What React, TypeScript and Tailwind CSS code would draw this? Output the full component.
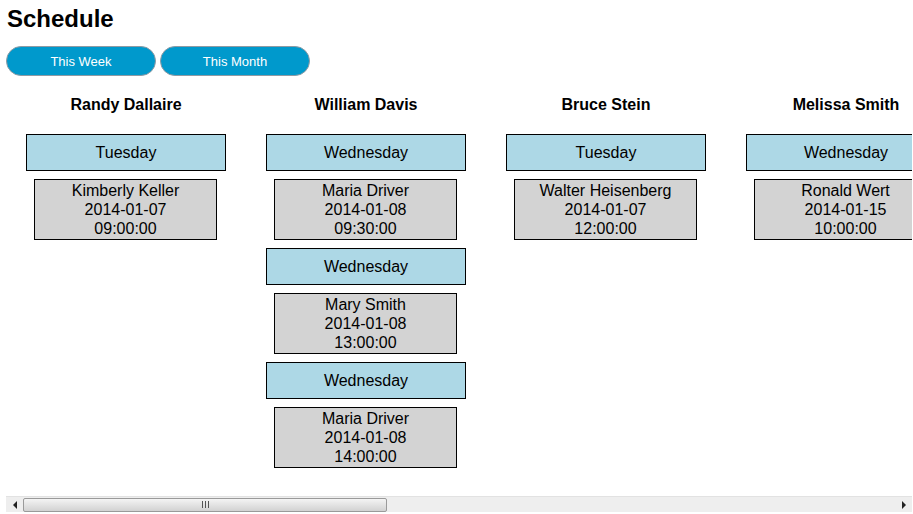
type Appointment = { day: string; client: string; date: string; time: string }

type Stylist = { name: string; appointments: Appointment[] }

const schedule: Stylist[] = [
  {
    name: 'Randy Dallaire',
    appointments: [{ day: 'Tuesday', client: 'Kimberly Keller', date: '2014-01-07', time: '09:00:00' }],
  },
  {
    name: 'William Davis',
    appointments: [
      { day: 'Wednesday', client: 'Maria Driver', date: '2014-01-08', time: '09:30:00' },
      { day: 'Wednesday', client: 'Mary Smith', date: '2014-01-08', time: '13:00:00' },
      { day: 'Wednesday', client: 'Maria Driver', date: '2014-01-08', time: '14:00:00' },
    ],
  },
  {
    name: 'Bruce Stein',
    appointments: [{ day: 'Tuesday', client: 'Walter Heisenberg', date: '2014-01-07', time: '12:00:00' }],
  },
  {
    name: 'Melissa Smith',
    appointments: [{ day: 'Wednesday', client: 'Ronald Wert', date: '2014-01-15', time: '10:00:00' }],
  },
]

function StylistColumn({ stylist }: { stylist: Stylist }) {
  return (
    <div className="flex w-[240px] shrink-0 flex-col items-center">
      <h3 className="mt-[1px] text-[16px] font-bold leading-[20px]">{stylist.name}</h3>
      <div className="mt-[19px] flex w-[200px] flex-col gap-[8px]">
        {stylist.appointments.map((a, i) => (
          <div key={i} className="flex flex-col gap-[8px]">
            <div className="h-[37px] w-[200px] border border-black bg-[#add8e6] text-center text-[16px] leading-[35px]">{a.day}</div>
            <div className="ml-[8px] w-[183px] border border-black bg-[#d3d3d3] py-[1px] text-center text-[16px] leading-[19px]">
              <div>{a.client}</div>
              <div>{a.date}</div>
              <div>{a.time}</div>
            </div>
          </div>
        ))}
      </div>
    </div>
  )
}

function FakeScrollbar() {
  return (
    <div className="flex h-[16px] w-[906px] items-center border-t border-[#e2e2e2] bg-[#eeeeee]">
      <div className="flex h-[15px] w-[17px] items-center justify-center">
        <span className="h-0 w-0 border-y-[4px] border-r-[4px] border-y-transparent border-r-[#222]" />
      </div>
      <div className="flex h-[14px] w-[364px] items-center justify-center rounded-[2px] border border-[#9a9a9a] bg-gradient-to-b from-[#f4f4f4] to-[#d2d2d2]">
        <div className="flex gap-[2px]">
          <span className="h-[7px] w-px bg-[#555]" />
          <span className="h-[7px] w-px bg-[#555]" />
          <span className="h-[7px] w-px bg-[#555]" />
        </div>
      </div>
      <div className="flex-1" />
      <div className="flex h-[15px] w-[17px] items-center justify-center">
        <span className="h-0 w-0 border-y-[4px] border-l-[4px] border-y-transparent border-l-[#222]" />
      </div>
    </div>
  )
}

export default function App() {
  return (
    <div className="h-[514px] w-[913px] overflow-hidden bg-white pl-[6px] pt-[5px] text-black" style={{ fontFamily: '"Liberation Sans", Arial, sans-serif' }}>
      <h2 className="pl-[1px] text-[24px] font-bold leading-[28px]">Schedule</h2>
      <div className="mt-[13px] flex gap-[4px]">
        <button className="h-[30px] w-[150px] rounded-full border border-[#8f9aa3] bg-[#0099cc] pt-[1px] text-[13px] text-white">This Week</button>
        <button className="h-[30px] w-[150px] rounded-full border border-[#8f9aa3] bg-[#0099cc] pt-[1px] text-[13px] text-white">This Month</button>
      </div>
      <div className="mt-[18px] flex h-[402px] w-[906px] overflow-hidden">
        {schedule.map((s) => (
          <StylistColumn key={s.name} stylist={s} />
        ))}
      </div>
      <FakeScrollbar />
    </div>
  )
}
